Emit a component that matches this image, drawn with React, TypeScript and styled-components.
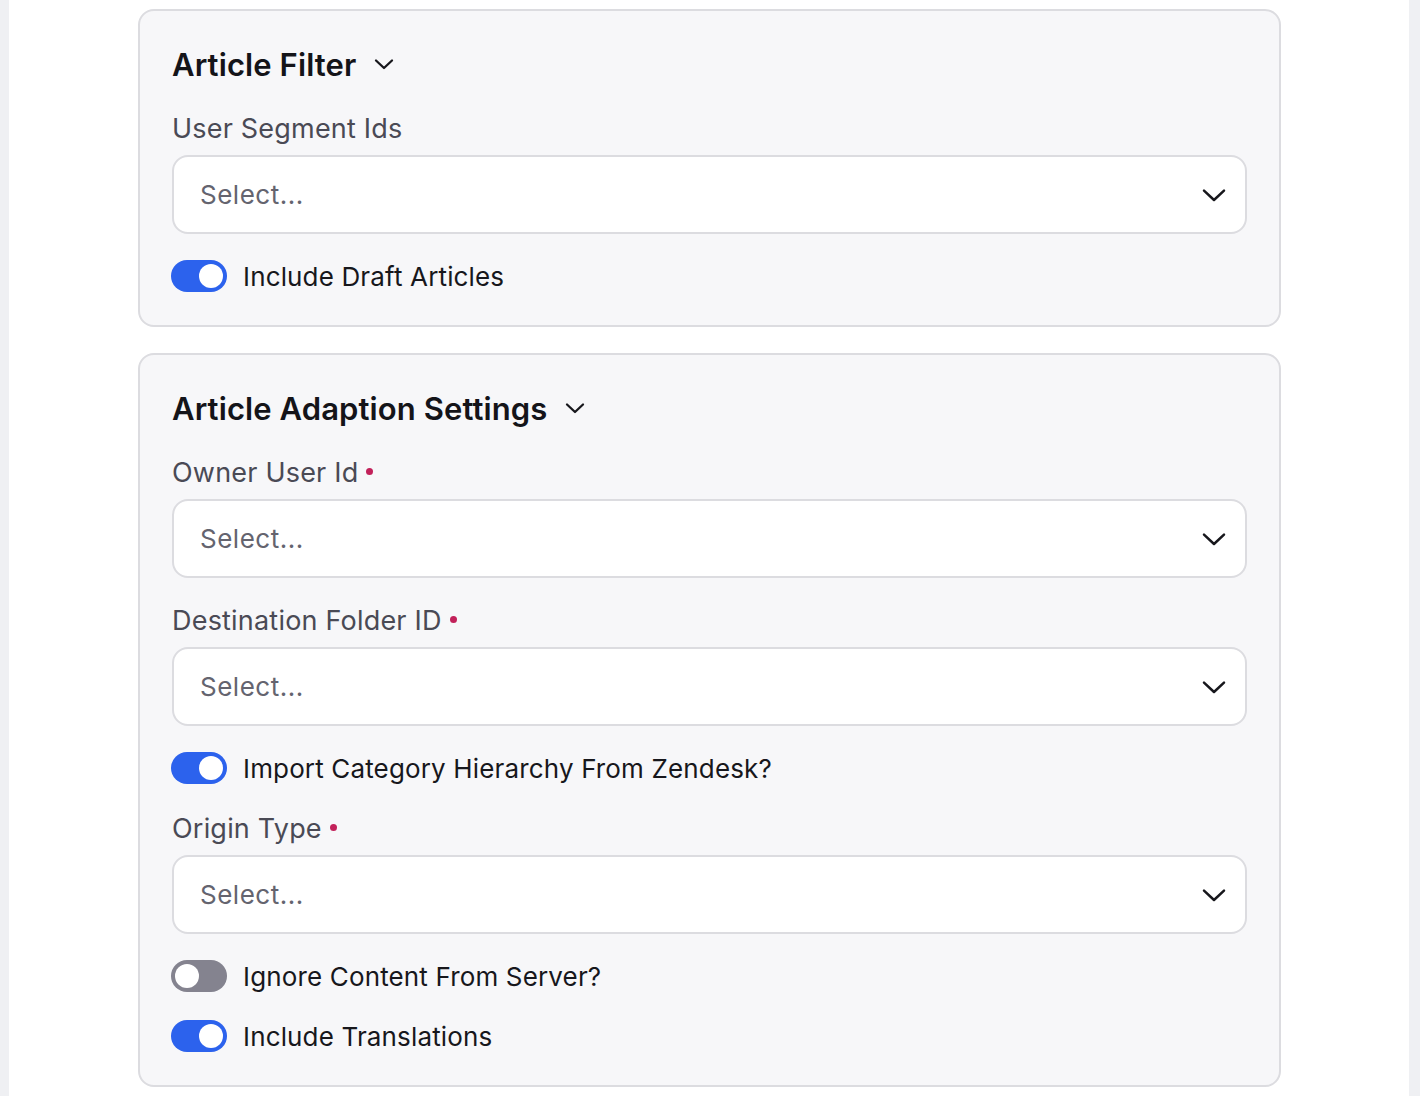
import React from "react";
import styled, { createGlobalStyle } from "styled-components";

const Global = createGlobalStyle`
  html, body { margin: 0; padding: 0; }
  body {
    background: #eff0f3;
    font-family: Inter, "Noto Sans", "Liberation Sans", sans-serif;
    -webkit-font-smoothing: antialiased;
  }
`;

const Page = styled.div`
  margin: 0 11px 0 9px;
  background: #ffffff;
  min-height: 1096px;
  padding: 9px 128px 0 129px;
  display: flex;
  flex-direction: column;
  gap: 26px;
`;

const Card = styled.section`
  box-sizing: border-box;
  background: #f7f7f9;
  border: 2px solid #dcdce0;
  border-radius: 16px;
  padding: 33px 32px;
  display: flex;
  flex-direction: column;
  gap: 26px;
`;

const TitleRow = styled.div`
  display: flex;
  align-items: center;
  gap: 16px;
  height: 40px;
`;

const Title = styled.h2`
  margin: 0;
  font-size: 31px;
  font-weight: 600;
  color: #141419;
  letter-spacing: 0.1px;
`;

const Field = styled.div`
  display: flex;
  flex-direction: column;
  gap: 9px;
  & + & { margin-top: -2px; }
`;

const Label = styled.div`
  display: flex;
  align-items: center;
  gap: 8px;
  height: 36px;
  font-size: 27px;
  color: #4a4a55;
  letter-spacing: 0.2px;
`;

const Dot = styled.span`
  width: 7px;
  height: 7px;
  border-radius: 50%;
  background: #c2215a;
  margin-top: -2px;
`;

const SelectBox = styled.div`
  box-sizing: border-box;
  height: 79px;
  background: #ffffff;
  border: 2px solid #dcdce0;
  border-radius: 16px;
  display: flex;
  align-items: center;
  justify-content: space-between;
  padding: 0 16px 0 26px;
  font-size: 26px;
  color: #64646f;
  letter-spacing: 0.5px;
`;

const ToggleRow = styled.div`
  display: flex;
  align-items: center;
  gap: 16px;
  height: 32px;
  margin-left: -1px;
  & + & { margin-top: 2px; }
`;

const Track = styled.span<{ $on: boolean }>`
  box-sizing: border-box;
  width: 56px;
  height: 32px;
  border-radius: 16px;
  background: ${(p) => (p.$on ? "#2c62ed" : "#84838f")};
  display: flex;
  align-items: center;
  justify-content: ${(p) => (p.$on ? "flex-end" : "flex-start")};
  padding: 0 4px;
  flex-shrink: 0;
`;

const Knob = styled.span`
  width: 24px;
  height: 24px;
  border-radius: 50%;
  background: #ffffff;
`;

const ToggleText = styled.span`
  font-size: 26px;
  color: #17171c;
  letter-spacing: 0.15px;
`;

const Chevron = ({ size, stroke }: { size: number; stroke: number }) => (
  <svg width={size} height={size} viewBox="0 0 24 24" fill="none" stroke="#17171c" strokeWidth={stroke} strokeLinecap="round" strokeLinejoin="round">
    <path d="M4 8.5l8 7.5 8-7.5" />
  </svg>
);

const Select = ({ label, required }: { label: string; required?: boolean }) => (
  <Field>
    <Label>
      {label}
      {required && <Dot />}
    </Label>
    <SelectBox>
      <span>Select...</span>
      <Chevron size={30} stroke={2} />
    </SelectBox>
  </Field>
);

const Toggle = ({ on, text }: { on: boolean; text: string }) => (
  <ToggleRow>
    <Track $on={on}>
      <Knob />
    </Track>
    <ToggleText>{text}</ToggleText>
  </ToggleRow>
);

export default function App() {
  return (
    <>
      <Global />
      <Page>
        <Card>
          <TitleRow>
            <Title>Article Filter</Title>
            <Chevron size={24} stroke={2.3} />
          </TitleRow>
          <Select label="User Segment Ids" />
          <Toggle on text="Include Draft Articles" />
        </Card>
        <Card>
          <TitleRow>
            <Title>Article Adaption Settings</Title>
            <Chevron size={24} stroke={2.3} />
          </TitleRow>
          <Select label="Owner User Id" required />
          <Select label="Destination Folder ID" required />
          <Toggle on text="Import Category Hierarchy From Zendesk?" />
          <Select label="Origin Type" required />
          <Toggle on={false} text="Ignore Content From Server?" />
          <Toggle on text="Include Translations" />
        </Card>
      </Page>
    </>
  );
}
